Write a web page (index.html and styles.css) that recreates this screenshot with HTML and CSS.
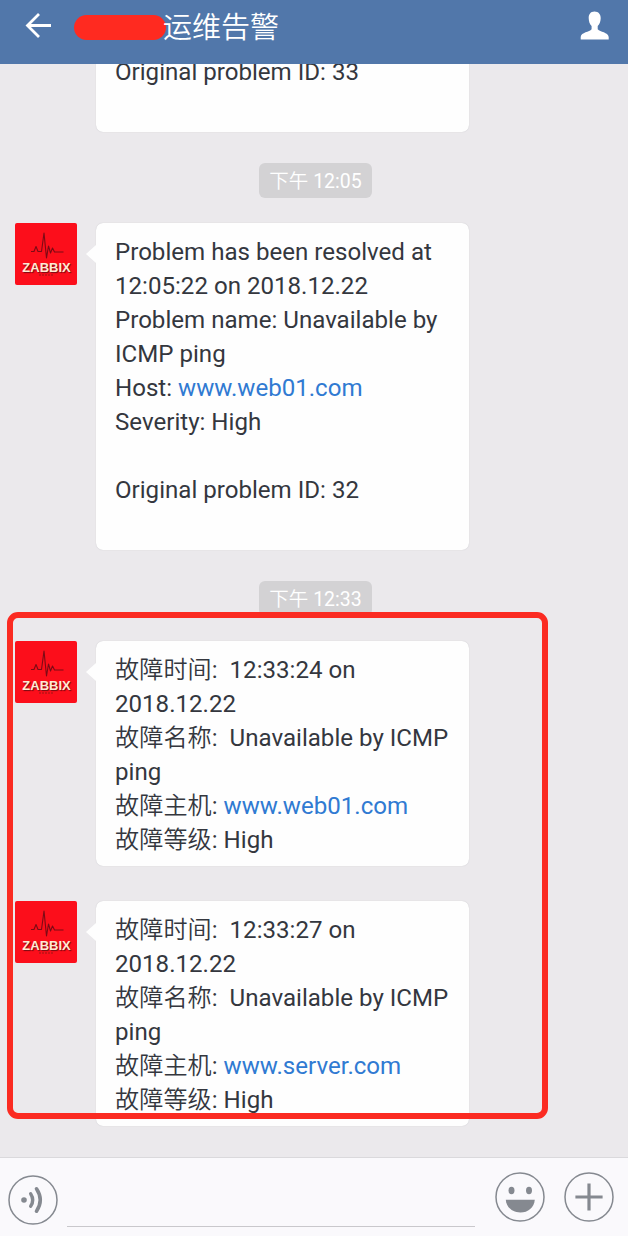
FILE: index.html
```html
<!DOCTYPE html>
<html lang="zh-CN">
<head>
<meta charset="utf-8">
<title>运维告警</title>
<link rel="stylesheet" href="styles.css">
</head>
<body>
<svg class="defs" width="0" height="0" aria-hidden="true">
  <symbol id="pulse" viewBox="0 0 62 62">
    <path d="M16 28.500h3l2-5 2 5h3.500l2.500-18.500 2.500 25 2-12 2 7 2-5 2 4h9" fill="none" stroke="#7c0b15" stroke-width="1.100" stroke-linejoin="round"/>
    <path d="M24 52h15" stroke="#9c1515" stroke-width="1" stroke-dasharray="2 1"/>
  </symbol>
</svg>
<div class="app">
  <header class="header">
    <svg class="back" viewBox="0 0 28 28"><path d="M14 2 2.500 13.500 14 25M3 13.500h23" fill="none" stroke="#fff" stroke-width="2.800"/></svg>
    <div class="title"><span class="redaction"></span><span class="name">运维告警</span></div>
    <svg class="person" viewBox="0 0 30 30"><path d="M14.500.5C10.500.5 8.600 3.400 8.700 7.200c.1 3.300 1 6 2.900 7.800v3.300C9.500 21.100 1.200 21.200.7 26v2.500h28V26c-.7-4.800-8.500-4.900-11-7.700V15c1.900-1.800 2.900-4.500 3-7.800C20.800 3.400 18.500.5 14.500.5Z" fill="#fff"/></svg>
  </header>

  <main class="chat">
    <div class="message continued"><div class="bubble">Original problem ID: 33
<br></div></div>
    <time class="stamp"><span class="cjk">下午</span> 12:05</time>
    <div class="message">
      <div class="avatar"><svg class="pulse"><use href="#pulse"/></svg><span class="brand">ZABBIX</span></div>
      <div class="bubble tail">Problem has been resolved at
12:05:22 on 2018.12.22
Problem name: Unavailable by
ICMP ping
Host: <a class="link">www.web01.com</a>
Severity: High

Original problem ID: 32
<br></div>
    </div>
    <time class="stamp"><span class="cjk">下午</span> 12:33</time>
    <div class="message">
      <div class="avatar"><svg class="pulse"><use href="#pulse"/></svg><span class="brand">ZABBIX</span></div>
      <div class="bubble tail"><span class="cjk">故障时间</span>:  12:33:24 on
2018.12.22
<span class="cjk">故障名称</span>:  Unavailable by ICMP
ping
<span class="cjk">故障主机</span>: <a class="link">www.web01.com</a>
<span class="cjk">故障等级</span>: High</div>
    </div>
    <div class="message follow">
      <div class="avatar"><svg class="pulse"><use href="#pulse"/></svg><span class="brand">ZABBIX</span></div>
      <div class="bubble tail"><span class="cjk">故障时间</span>:  12:33:27 on
2018.12.22
<span class="cjk">故障名称</span>:  Unavailable by ICMP
ping
<span class="cjk">故障主机</span>: <a class="link">www.server.com</a>
<span class="cjk">故障等级</span>: High</div>
    </div>
  </main>

  <footer class="composer">
    <svg class="icon voice" viewBox="0 0 50 50" fill="none" stroke="#858990">
      <circle cx="25" cy="25" r="24" stroke-width="1.500"/>
      <circle cx="16" cy="25" r="2.800" fill="#858990" stroke="none"/>
      <path d="M22.700 18.800q4 6.200 0 12.400" stroke-width="3.400" stroke-linecap="round"/>
      <path d="M28.500 13.800q7.500 11.200 0 22.400" stroke-width="3.600" stroke-linecap="round"/>
    </svg>
    <div class="input"></div>
    <svg class="icon" viewBox="0 0 50 50">
      <circle cx="25" cy="25" r="24" fill="none" stroke="#858990" stroke-width="1.500"/>
      <ellipse cx="16.500" cy="18.500" rx="3" ry="3.700" fill="#858990"/>
      <ellipse cx="34" cy="18.500" rx="3" ry="3.700" fill="#858990"/>
      <path d="M10.800 27.700h29C39.200 35.500 33 40.500 25.300 40.500S11.400 35.500 10.800 27.700Z" fill="#858990"/>
    </svg>
    <svg class="icon plus" viewBox="0 0 50 50" fill="none" stroke="#858990">
      <circle cx="25" cy="25" r="24" stroke-width="1.500"/>
      <path d="M25 13v24M13 25h24" stroke-width="3.200" stroke-linecap="square"/>
    </svg>
  </footer>
  <div class="highlight"></div>
</div>
</body>
</html>
```

FILE: styles.css
```css
* { box-sizing: border-box; }
body { margin: 0; }
.defs { position: absolute; }
.app {
  position: relative;
  display: flex;
  flex-direction: column;
  width: 628px;
  height: 1236px;
  overflow: hidden;
  background: #ebe9ec;
  color: #34373e;
  font-family: Roboto, "Noto Sans CJK SC", sans-serif;
}
.header {
  display: flex;
  align-items: center;
  flex: 0 0 64px;
  padding: 0 18px 12px 25px;
  background: #5177aa;
  color: #fff;
}
.back { width: 28px; height: 28px; }
.title {
  display: flex;
  align-items: center;
  flex: 1;
  margin-left: 21px;
  font: 350 29px/40px "Noto Sans CJK SC", sans-serif;
}
.name { margin-top: -3px; }
.redaction {
  width: 92px;
  height: 25px;
  margin: 2px -3px 0 0;
  border-radius: 13px;
  background: #ff2a20;
}
.person { width: 30px; height: 30px; }
.chat {
  display: flex;
  flex-direction: column;
  justify-content: flex-end;
  flex: 1;
  min-height: 0;
  padding: 0 15px 31px;
  overflow: hidden;
}
.message {
  display: flex;
  flex-shrink: 0;
  align-items: flex-start;
  gap: 19px;
}
.continued { padding-left: 81px; }
.follow { margin-top: 35px; }
.avatar {
  position: relative;
  width: 62px;
  height: 62px;
  border-radius: 2px;
  background: #fc0e1b;
}
.pulse { display: block; width: 62px; height: 62px; }
.brand {
  position: absolute;
  top: 37px;
  left: 0;
  width: 63px;
  color: #ffe9d5;
  font: bold 13px/16px "Liberation Sans", sans-serif;
  text-align: center;
  text-shadow: 1px 1px 1px #730b12;
}
.bubble {
  position: relative;
  width: 373px;
  padding: 12px 0 9px 19px;
  border-radius: 7px;
  background: #fefefe;
  box-shadow: 0 0 1px #bdbcc0;
  font-size: 24.100px;
  line-height: 34px;
  white-space: pre;
}
.tail::before {
  content: "";
  position: absolute;
  top: 22px;
  left: -10px;
  border: solid transparent;
  border-width: 9px 10px 9px 0;
  border-right-color: #fefefe;
}
.cjk {
  font-family: "Noto Sans CJK SC", sans-serif;
  font-weight: 350;
  line-height: 1;
}
.bubble .cjk { letter-spacing: 0.100px; }
.link { color: #307ad2; }
.stamp {
  flex: none;
  align-self: center;
  width: 113px;
  height: 35px;
  margin: 31px 0 25px 3px;
  border-radius: 6px;
  background: #d3d2d4;
  color: #fff;
  font-size: 19.500px;
  line-height: 38px;
  text-align: center;
}
.composer {
  display: flex;
  flex: 0 0 79px;
  padding: 14px 14px 0 8px;
  border-top: 1px solid #dad9dc;
  background: #faf9fc;
}
.icon { width: 50px; height: 50px; flex: none; }
.voice { margin-top: 3px; }
.input {
  width: 408px;
  height: 55px;
  margin: 0 20px 0 9px;
  border-bottom: 1px solid #c9c8cc;
}
.plus { margin-left: 19px; }
.highlight {
  position: absolute;
  top: 612px;
  left: 7px;
  width: 541px;
  height: 507px;
  border: 6px solid #fb2b22;
  border-radius: 11px;
}
```
